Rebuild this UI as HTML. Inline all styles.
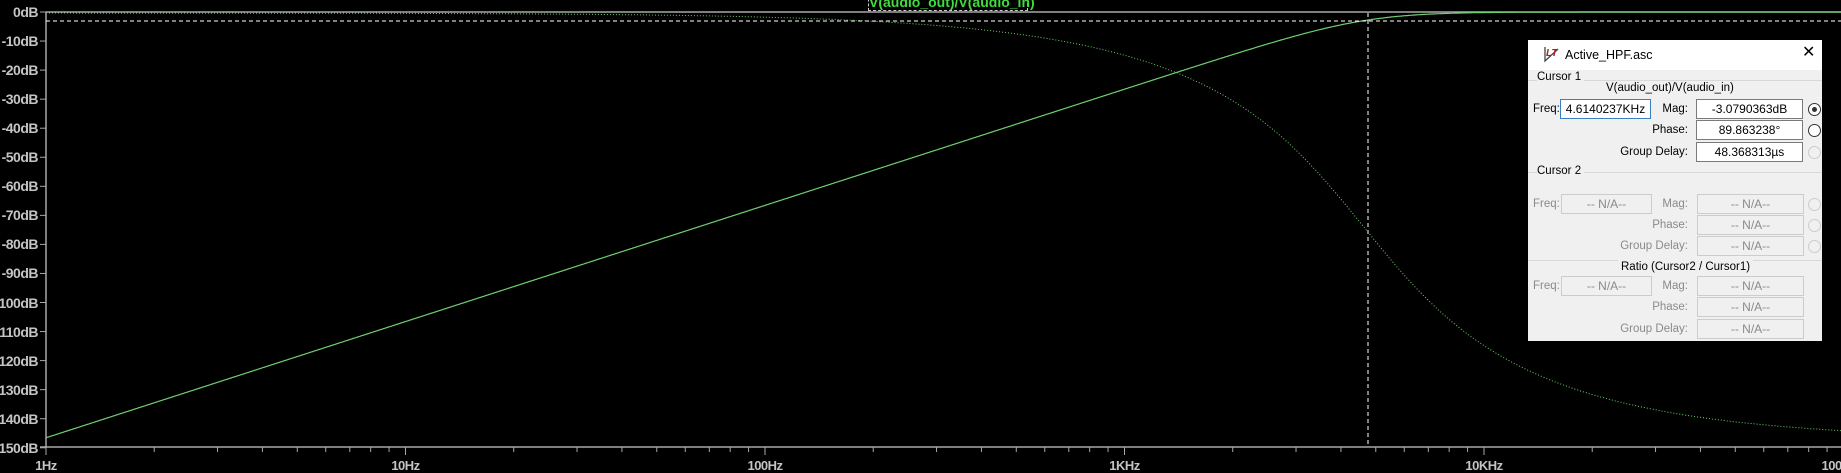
<!DOCTYPE html>
<html><head><meta charset="utf-8"><style>
body{margin:0;width:1841px;height:471px;background:#000;overflow:hidden;position:relative;font-family:"Liberation Sans",sans-serif}
.yl{position:absolute;right:1803px;color:#c4c4c4;font-size:14px;font-weight:bold;line-height:14px;letter-spacing:-0.5px}
.xl{position:absolute;top:458px;color:#c4c4c4;font-size:13px;font-weight:bold;transform:translateX(-50%);letter-spacing:-0.5px}
#dlg{position:absolute;left:1528px;top:40px;width:294px;height:301px;background:#f0f0f0;font-size:11.5px;color:#000}
#dlg .a{position:absolute;white-space:nowrap;line-height:14px}
#dlg .r{position:absolute;white-space:nowrap;line-height:14px;right:134px;text-align:right}
.box{position:absolute;background:#fff;border:1px solid #7a7a7a;text-align:center;line-height:18px;height:18px;font-size:12px;box-sizing:content-box}
.dis{background:#f0f0f0;border-color:#ccc;color:#8a8a8a}
.g{color:#8a8a8a}
.rad{position:absolute;width:11px;height:11px;border-radius:50%;border:1px solid #333;background:#fff}
.rad.d{border-color:#ccc;background:#f0f0f0}
.sep{position:absolute;left:0;width:294px;height:1px;background:#d8d8d8}
</style></head><body>
<svg id="s" width="1841" height="471" style="position:absolute;left:0;top:0"></svg>
<div id="labs"></div>
<div style="position:absolute;left:868px;top:-6px;width:158px;height:15px;border:1px dashed #ccc;color:#3fdc3f;font-size:14px;font-weight:bold;text-align:center;line-height:15px">V(audio_out)/V(audio_in)</div>
<div id="dlg">
<div class="a" style="left:0;top:0;width:294px;height:30px;background:#fff"></div>
<svg style="position:absolute;left:15px;top:5px" width="18" height="18"><path d="M2 2V16L15 4" fill="none" stroke="#444" stroke-width="1.3"/><text x="3" y="11" font-size="10" font-weight="bold" font-style="italic" fill="#b02020" font-family="Liberation Sans">LT</text></svg>
<div class="a" style="left:37px;top:8px;font-size:12.5px">Active_HPF.asc</div>
<div class="a" style="left:274px;top:6px;font-size:16px">✕</div>
<div class="sep" style="top:40px"></div>
<div class="a" style="left:9px;top:30px;background:#f0f0f0;padding-right:3px">Cursor 1</div>
<div class="a" style="left:78px;top:41px">V(audio_out)/V(audio_in)</div>
<div class="a" style="left:5px;top:62px">Freq:</div>
<div class="box" style="left:32px;top:59px;width:89px;border-color:#3a7fc4">4.6140237KHz</div>
<div class="r" style="top:62px">Mag:</div>
<div class="box" style="left:168px;top:59px;width:105px">-3.0790363dB</div>
<div class="rad" style="left:280px;top:63px"><div style="width:5px;height:5px;background:#333;border-radius:50%;margin:3px"></div></div>
<div class="r" style="top:83px">Phase:</div>
<div class="box" style="left:168px;top:80px;width:105px">89.863238°</div>
<div class="rad" style="left:280px;top:84px"></div>
<div class="r" style="top:105px">Group Delay:</div>
<div class="box" style="left:168px;top:102px;width:105px">48.368313µs</div>
<div class="rad d" style="left:280px;top:106px"></div>
<div class="sep" style="top:132px"></div>
<div class="a" style="left:9px;top:124px;background:#f0f0f0;padding-right:3px">Cursor 2</div>
<div class="a g" style="left:5px;top:157px">Freq:</div>
<div class="box dis" style="left:33px;top:154px;width:89px">-- N/A--</div>
<div class="r g" style="top:157px">Mag:</div>
<div class="box dis" style="left:169px;top:154px;width:105px">-- N/A--</div>
<div class="rad d" style="left:280px;top:158px"></div>
<div class="r g" style="top:178px">Phase:</div>
<div class="box dis" style="left:169px;top:175px;width:105px">-- N/A--</div>
<div class="rad d" style="left:280px;top:179px"></div>
<div class="r g" style="top:199px">Group Delay:</div>
<div class="box dis" style="left:169px;top:196px;width:105px">-- N/A--</div>
<div class="rad d" style="left:280px;top:200px"></div>
<div class="sep" style="top:220px"></div>
<div class="a" style="left:90px;top:220px;background:#f0f0f0;padding:0 3px">Ratio (Cursor2 / Cursor1)</div>
<div class="a g" style="left:5px;top:239px">Freq:</div>
<div class="box dis" style="left:33px;top:236px;width:89px">-- N/A--</div>
<div class="r g" style="top:239px">Mag:</div>
<div class="box dis" style="left:169px;top:236px;width:105px">-- N/A--</div>
<div class="r g" style="top:260px">Phase:</div>
<div class="box dis" style="left:169px;top:257px;width:105px">-- N/A--</div>
<div class="r g" style="top:282px">Group Delay:</div>
<div class="box dis" style="left:169px;top:279px;width:105px">-- N/A--</div>
</div>
<script>
var s=document.getElementById('s'),L=document.getElementById('labs');
var X0=46,D=359.5,Y0=12,DY=29.05,h='';
function X(lf){return X0+D*lf}
h+='<line x1="46" y1="12" x2="1841" y2="12" stroke="#a8a8a8" stroke-width="1.5"/>';
h+='<line x1="46" y1="12" x2="46" y2="448" stroke="#a8a8a8" stroke-width="1.5"/>';
h+='<line x1="40" y1="447" x2="1841" y2="447" stroke="#a8a8a8" stroke-width="1.5"/>';
var lab='';
for(var i=0;i<=15;i++){var y=Y0+i*DY;h+='<line x1="40" y1="'+y+'" x2="46" y2="'+y+'" stroke="#a8a8a8"/>';
lab+='<div class="yl" style="top:'+(y-7)+'px">'+(i?'-':'')+(i*10)+'dB</div>';}
for(var d=0;d<6;d++)for(var k=1;k<10;k++){var x=X(d+Math.log10(k));if(x>1841)break;h+='<line x1="'+x+'" y1="447" x2="'+x+'" y2="'+(k==1?455:452)+'" stroke="#a8a8a8"/>';}
var xn=['1Hz','10Hz','100Hz','1KHz','10KHz','100KHz'];
for(var d=0;d<6;d++)lab+='<div class="xl" style="left:'+X(d)+'px">'+xn[d]+'</div>';
L.innerHTML=lab;
var fc=4614,m='',p='';
for(var x=46;x<=1841;x+=1){var f=Math.pow(10,(x-X0)/D),r=f/fc;
var db=20*Math.log10(r*r/Math.sqrt(1+r*r*r*r));
var ph=180-Math.atan2(Math.SQRT2*r,1-r*r)*180/Math.PI;
m+=(m?'L':'M')+x+','+(Y0-db/10*DY).toFixed(1);
p+=(p?'L':'M')+x+','+(13+(180-ph)*2.37).toFixed(1);}
h+='<path d="'+m+'" fill="none" stroke="#6fcf6f" stroke-width="1.2"/>';
h+='<path d="'+p+'" fill="none" stroke="#6fcf6f" stroke-width="1" stroke-dasharray="1,2"/>';
h+='<line x1="46" y1="21" x2="1841" y2="21" stroke="#fff" stroke-dasharray="4,3"/>';
h+='<line x1="1368" y1="13" x2="1368" y2="447" stroke="#fff" stroke-dasharray="4,3"/>';
s.innerHTML=h;
</script>
</body></html>
